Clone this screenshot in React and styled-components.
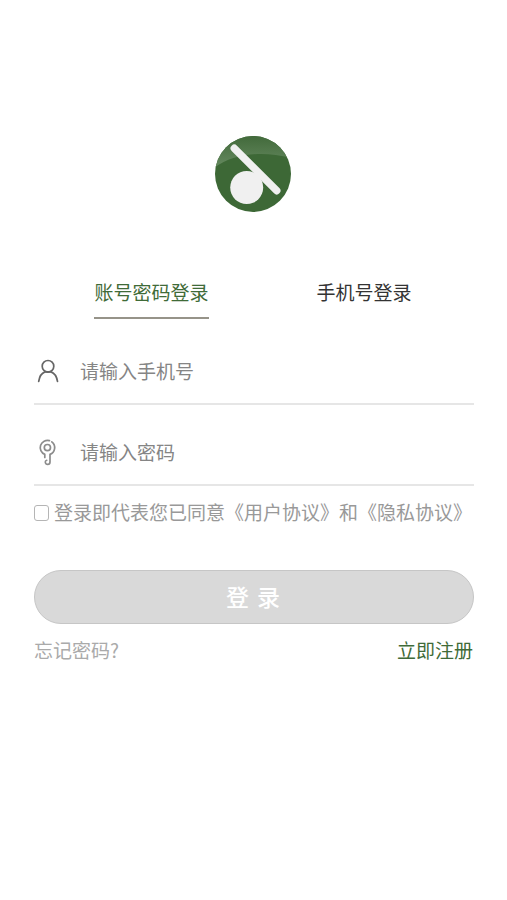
import React, { useState } from 'react';
import styled, { createGlobalStyle } from 'styled-components';

const GlobalStyle = createGlobalStyle`
  * { box-sizing: border-box; }
  body {
    margin: 0;
    background: #fff;
    font-family: "Noto Sans CJK SC", sans-serif;
    font-size: 19px;
    line-height: 28px;
  }
  button, input { font: inherit; }
`;

const Page = styled.main`
  display: flex;
  flex-direction: column;
  min-height: 900px;
  padding: 135px 33px 0 34px;
`;

const Logo = styled.svg`
  display: block;
  width: 78px;
  height: 78px;
  margin-left: 180px;
`;

const Tabs = styled.nav`
  display: grid;
  grid-template-columns: 235px 190px;
  margin-top: 65px;
`;

const Tab = styled.button`
  justify-self: center;
  height: 41px;
  padding: 0 0 12px;
  border: 0;
  border-bottom: 2px solid ${(p) => (p.$active ? '#969389' : 'transparent')};
  background: none;
  line-height: 27px;
  color: ${(p) => (p.$active ? '#3f6b38' : '#333')};
  white-space: nowrap;
`;

const Field = styled.label`
  display: flex;
  align-items: center;
  height: ${(p) => p.$height}px;
  padding-top: ${(p) => p.$top}px;
  border-bottom: 2px solid #e6e6e6;
`;

const FieldIcon = styled.svg`
  flex: none;
  width: 28px;
  height: 30px;
  margin-right: 18px;
  fill: none;
  stroke: ${(p) => p.$color};
  stroke-width: 1.7;
  stroke-linecap: round;
  stroke-linejoin: round;
`;

const Input = styled.input`
  flex: 1;
  min-width: 0;
  height: 30px;
  padding: 0 0 2px;
  border: 0;
  outline: 0;
  background: none;
  color: #333;
  &::placeholder { color: #858585; opacity: 1; }
`;

const Agreement = styled.label`
  display: flex;
  align-items: center;
  height: 28px;
  margin-top: 12px;
  color: #999;
  white-space: nowrap;
`;

const Checkbox = styled.input`
  appearance: none;
  flex: none;
  width: 15px;
  height: 16px;
  margin: 1px 5px 0 0;
  border: 1.5px solid #b5b5b5;
  border-radius: 3px;
  background: #fff;
  &:checked { background: #3f6b38; }
`;

const Submit = styled.button`
  height: 54px;
  margin-top: 44px;
  padding: 0 2px 2px 0;
  border: 1px solid #c6c6c6;
  border-radius: 27px;
  background: #d9d9d9;
  color: #fff;
  font-size: 23px;
  font-weight: 500;
  word-spacing: 3px;
`;

const Links = styled.footer`
  display: flex;
  justify-content: space-between;
  margin-top: 12px;
  padding-right: 1px;
`;

const Link = styled.a`
  color: ${(p) => (p.$primary ? '#3f6b38' : '#aaa')};
  text-decoration: none;
`;

export default function App() {
  const [tab, setTab] = useState(0);
  return (
    <>
      <GlobalStyle />
      <Page>
        <Logo viewBox="0 0 78 78">
          <defs>
            <linearGradient id="shine" x1="0" y1="0" x2="0" y2="1">
              <stop offset="0" stopColor="#41693a" />
              <stop offset="1" stopColor="#668a60" />
            </linearGradient>
            <clipPath id="disc"><circle cx="39" cy="39" r="38" /></clipPath>
          </defs>
          <circle cx="39" cy="39" r="38" fill="#3d6836" />
          <path d="M0 33C18 19 47 15 78 23V0H0Z" fill="url(#shine)" clipPath="url(#disc)" />
          <circle cx="32.7" cy="52.5" r="16.5" fill="#f0f0f0" />
          <path d="M20.3 13.3L62.7 55.7" stroke="#f0f0f0" strokeWidth="7.5" strokeLinecap="round" />
        </Logo>
        <Tabs>
          {['账号密码登录', '手机号登录'].map((label, i) => (
            <Tab key={label} $active={tab === i} onClick={() => setTab(i)}>{label}</Tab>
          ))}
        </Tabs>
        <Field $height={86} $top={20}>
          <FieldIcon viewBox="0 0 28 30" $color="#666">
            <circle cx="14" cy="10.3" r="5.8" />
            <path d="M4.7 25.4C5.5 20.4 8 17 11 15.9H17C20 17 22.7 20.4 23.5 25.4" />
          </FieldIcon>
          <Input placeholder="请输入手机号" />
        </Field>
        <Field $height={81} $top={16}>
          <FieldIcon viewBox="0 0 28 30" $color="#8c8c8c">
            <path d="M15.5 2.6A7.3 7.3 0 0 0 10.8 16.4V19.5M17.8 3.8A7.3 7.3 0 0 1 16 16.4V24C16 27.2 11.3 27.2 11.3 24.1C11.3 23.1 11.9 22.5 12.7 22.3" />
            <circle cx="13.4" cy="9.6" r="3.1" />
          </FieldIcon>
          <Input type="password" placeholder="请输入密码" />
        </Field>
        <Agreement>
          <Checkbox type="checkbox" />
          登录即代表您已同意《用户协议》和《隐私协议》
        </Agreement>
        <Submit>登 录</Submit>
        <Links>
          <Link>忘记密码?</Link>
          <Link $primary>立即注册</Link>
        </Links>
      </Page>
    </>
  );
}
